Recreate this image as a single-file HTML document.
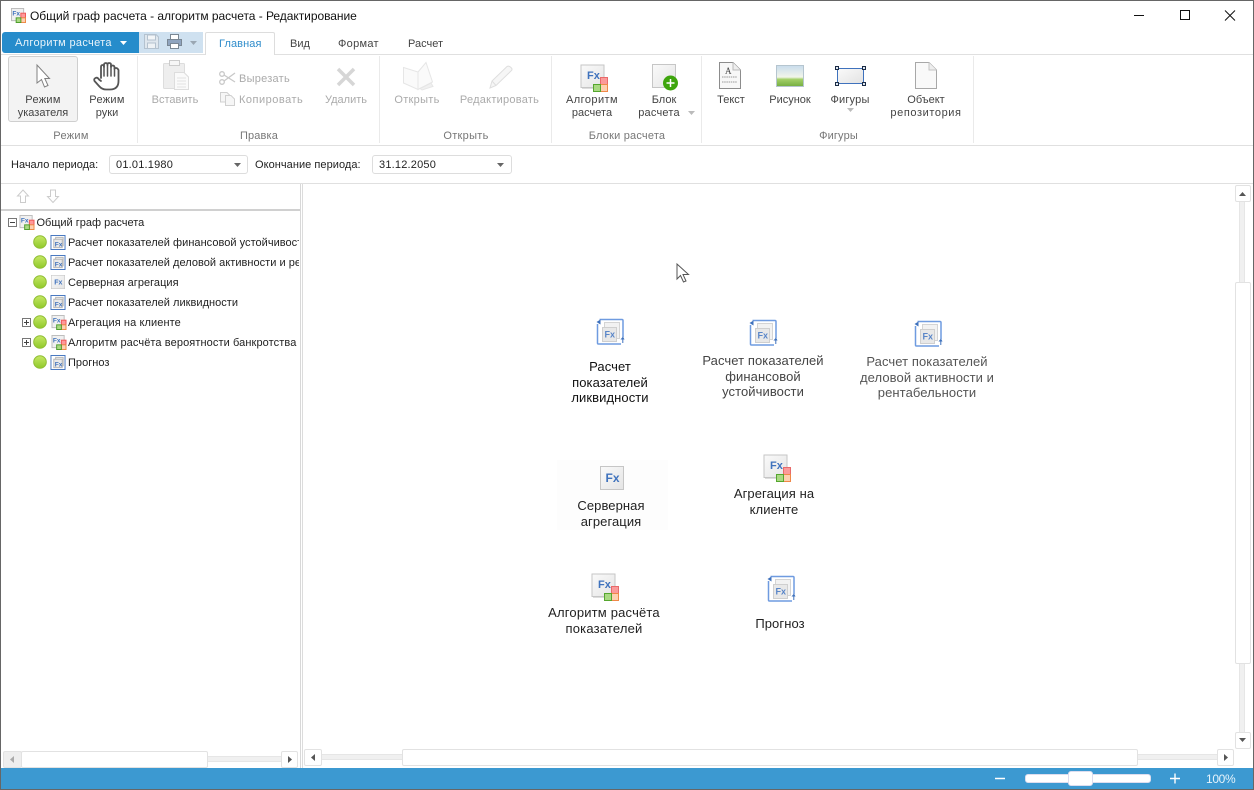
<!DOCTYPE html>
<html><head><meta charset="utf-8"><title>Общий граф расчета</title>
<style>
html,body{margin:0;padding:0}
body{width:1254px;height:790px;overflow:hidden;background:#fff;position:relative;font-family:"Liberation Sans","DejaVu Sans",sans-serif}
.t{position:absolute;white-space:nowrap;font-size:11px;line-height:14px;color:#444}
.c{transform:translateX(-50%);text-align:center}
.d{color:#aaa}
.g{color:#777}
.b{position:absolute;box-sizing:border-box}
.tree{position:absolute;white-space:nowrap;font-size:11px;line-height:14px;color:#222;left:68px;letter-spacing:.03px}
.cv{position:absolute;transform:translateX(-50%);text-align:center;white-space:nowrap;font-size:13px;line-height:15.5px;color:#222;letter-spacing:.08px}
svg{position:absolute;overflow:visible}
.sb{position:absolute;box-sizing:border-box;background:#fff;border:1px solid #e2e2e2;border-radius:2px}
.tr{position:absolute;background:#f0f0f0;border:1px solid #e6e6e6;box-sizing:border-box}
</style></head><body>

<svg width="0" height="0" style="position:absolute">
<defs>
<linearGradient id="pg" x1="0" y1="0" x2="1" y2="1"><stop offset="0" stop-color="#fafafa"/><stop offset="1" stop-color="#e4e4e4"/></linearGradient>
<linearGradient id="gb" x1="0" y1="0" x2="0" y2="1"><stop offset="0" stop-color="#c6e865"/><stop offset="1" stop-color="#8fc82a"/></linearGradient>
<linearGradient id="sky" x1="0" y1="0" x2="0" y2="1"><stop offset="0" stop-color="#c8dcec"/><stop offset=".55" stop-color="#f2f5ea"/><stop offset=".66" stop-color="#a3d068"/><stop offset="1" stop-color="#74ad40"/></linearGradient>
<symbol id="alg" viewBox="0 0 29 29">
<rect x="1" y="1" width="23" height="22.500" fill="url(#pg)" stroke="#c6c6c6"/>
<path d="M2 24.500H24" stroke="#ddd"/>
<text x="7" y="15" font-family="Liberation Sans" font-weight="bold" font-size="11" fill="#3f72bd">Fx</text>
<rect x="20.500" y="13.500" width="7" height="7" fill="#fb9a9a" stroke="#e86a6a"/>
<rect x="20.500" y="20.500" width="7" height="7" fill="#fdd0b0" stroke="#f08848"/>
<rect x="13.500" y="20.500" width="7" height="7" fill="#a9d982" stroke="#55a62e"/>
</symbol>
<symbol id="calc" viewBox="0 0 29 28">
<path d="M3.500 1.500H26Q27 1.500 27 2.500V19M25 26H2.500Q1.500 26 1.500 25V6" fill="none" stroke="#6f9be0" stroke-width="1.500"/>
<path d="M4.500 1.500L.5 4 4.500 6.500zM24.500 21.500L27 18.500 28.500 21.500z" fill="#3f72bd"/>
<path d="M26.800 21V25" stroke="#3f72bd"/>
<rect x="8.500" y="4.500" width="15" height="16" fill="#f2f2f2" stroke="#d4d4d4"/>
<rect x="6.500" y="9.500" width="14" height="14" fill="#e8e8e8" stroke="#cfcfcf"/>
<text x="8.500" y="19.500" font-family="Liberation Sans" font-weight="bold" font-size="9" fill="#5a86c8">Fx</text>
</symbol>
<symbol id="srv" viewBox="0 0 24 24">
<rect x=".5" y=".5" width="23" height="23" fill="url(#pg)" stroke="#c6c6c6"/>
<text x="5.500" y="16" font-family="Liberation Sans" font-weight="bold" font-size="12" fill="#3f72bd">Fx</text>
</symbol>
<symbol id="tcalc" viewBox="0 0 16 16">
<rect x=".5" y=".5" width="15" height="15" fill="#fff" stroke="#3f72bd"/>
<rect x="5.500" y="2.500" width="8" height="9" fill="#eee" stroke="#b4b4b4"/>
<rect x="3.500" y="4.500" width="9" height="9" fill="#e9e9e9" stroke="#b4b4b4"/>
<text x="4.500" y="12" font-family="Liberation Sans" font-weight="bold" font-size="7" fill="#3f72bd">Fx</text>
</symbol>
<symbol id="talg" viewBox="0 0 16 16">
<rect x=".5" y=".5" width="13" height="13" fill="#f0f0f0" stroke="#bbb"/>
<text x="1.500" y="8" font-family="Liberation Sans" font-weight="bold" font-size="7" fill="#3f72bd">Fx</text>
<rect x="10.500" y="5.500" width="5" height="5" fill="#f99" stroke="#e55"/>
<rect x="10.500" y="10.500" width="5" height="5" fill="#fdd0b0" stroke="#e84"/>
<rect x="5.500" y="10.500" width="5" height="5" fill="#a9d982" stroke="#4a9a28"/>
</symbol>
<symbol id="bul" viewBox="0 0 14 14"><circle cx="7" cy="7" r="6.300" fill="url(#gb)" stroke="#8fbd34"/></symbol>
<symbol id="plus" viewBox="0 0 9 9"><rect x=".5" y=".5" width="8" height="8" fill="#fff" stroke="#777"/><path d="M2 4.500H7M4.500 2V7" stroke="#444"/></symbol>
</defs></svg>

<!-- window frame -->
<div class="b" style="left:0;top:0;width:1254px;height:790px;border:1px solid #666;z-index:50;pointer-events:none"></div>

<!-- title -->
<svg style="left:11px;top:8px" width="15" height="15" viewBox="0 0 16 16"><use href="#talg" width="16" height="16"/></svg>
<div class="t" style="left:30px;top:9px;font-size:12px;color:#111;letter-spacing:-.04px">Общий граф расчета - алгоритм расчета - Редактирование</div>
<svg style="left:1134px;top:8px" width="112" height="16" fill="none" stroke="#111">
<path d="M0 7.500H10"/>
<rect x="46.500" y="2.500" width="9" height="9"/>
<path d="M91 2.500L101 12.500M101 2.500L91 12.500" stroke-width="1"/>
</svg>

<!-- app button, QAT, tabs -->
<div class="b" style="left:2px;top:32px;width:137px;height:21px;background:#268ccb;border-radius:3px 0 0 3px"></div>
<div class="t" style="left:15px;top:36px;color:#e8f3fa;letter-spacing:.32px">Алгоритм расчета</div>
<svg style="left:120px;top:41px" width="7" height="4"><path d="M0 0H7L3.500 4z" fill="#fff"/></svg>
<div class="b" style="left:139px;top:32px;width:64px;height:21px;background:#cfe1f0"></div>
<svg style="left:144px;top:34px" width="15" height="15" fill="none" stroke="#b4c2cf"><path d="M.5 .5H12L14.500 3V14.500H.5z" fill="#dfe7ee"/><rect x="3.500" y="1" width="8" height="5" fill="#f3f6f8"/><rect x="3.500" y="9" width="8" height="5.500" fill="#eef2f5"/></svg>
<svg style="left:167px;top:34px" width="15" height="15" fill="none" stroke="#7a8794"><rect x="3.500" y=".5" width="8" height="5" fill="#fff"/><rect x=".5" y="5.500" width="14" height="6" fill="#8fa4bf"/><rect x="3.500" y="9.500" width="8" height="5" fill="#fff"/></svg>
<svg style="left:190px;top:41px" width="7" height="4"><path d="M0 0H7L3.500 4z" fill="#9aa7b3"/></svg>
<div class="b" style="left:205px;top:32px;width:70px;height:23px;background:#fff;border:1px solid #ddd;border-bottom:none;border-radius:2px 2px 0 0;z-index:2"></div>
<div class="t" style="left:219px;top:37px;color:#2f8ccb;z-index:3;letter-spacing:.1px">Главная</div>
<div class="t" style="left:290px;top:37px">Вид</div>
<div class="t" style="left:338px;top:37px;letter-spacing:.3px">Формат</div>
<div class="t" style="left:408px;top:37px">Расчет</div>
<div class="b" style="left:1px;top:54px;width:1252px;height:1px;background:#e0e0e0"></div>

<!-- ribbon -->
<div class="b" style="left:1px;top:145px;width:1252px;height:1px;background:#e0e0e0"></div>
<div class="b" style="left:137px;top:56px;width:1px;height:87px;background:#eaeaea"></div>
<div class="b" style="left:379px;top:56px;width:1px;height:87px;background:#eaeaea"></div>
<div class="b" style="left:551px;top:56px;width:1px;height:87px;background:#eaeaea"></div>
<div class="b" style="left:701px;top:56px;width:1px;height:87px;background:#eaeaea"></div>
<div class="b" style="left:973px;top:56px;width:1px;height:87px;background:#eaeaea"></div>
<div class="b" style="left:8px;top:56px;width:70px;height:66px;background:#f3f3f3;border:1px solid #cfcfcf;border-radius:3px"></div>

<svg style="left:36px;top:64px" width="14" height="24"><path d="M1 1V19L5.500 15.500 8.500 23 12 21.500 8.800 14.500H13.500z" fill="#fff" stroke="#808080"/></svg>
<svg style="left:93px;top:62px" width="27" height="29" fill="none" stroke="#555" stroke-width="1.800" stroke-linecap="round" stroke-linejoin="round"><path d="M8 16V5Q8 3 9.500 3T11 5V3Q11 1 12.800 1T14.500 3V2.500Q14.500 1 16.300 1T18 3V5Q18 3.500 19.600 3.500T21.500 5V7Q21.500 6 23 6T25.500 8V19Q25.500 27.500 17 27.500H13Q9 27.500 6 24L1.500 19Q.5 17 2.500 16T6 17.500L8 19"/><path d="M11 5V14M14.500 3V14M18 4V14M21.500 6V14" stroke-width="1.500"/></svg>
<div class="t c" style="left:43px;top:94px;line-height:13px"><span style="letter-spacing:.3px">Режим</span><br>указателя</div>
<div class="t c" style="left:107px;top:94px;line-height:13px"><span style="letter-spacing:.3px">Режим</span><br>руки</div>
<div class="t c g" style="left:71px;top:129px;letter-spacing:.3px">Режим</div>

<!-- Paste -->
<svg style="left:163px;top:60px" width="27" height="31" fill="none"><rect x=".5" y="3.500" width="21" height="25" rx="1" fill="#eee" stroke="#ddd"/><rect x="6.500" y=".5" width="10" height="5" fill="#f6f6f6" stroke="#ccc"/><path d="M11.500 12.500H21L25.500 17V29.500H11.500z" fill="#fafafa" stroke="#ddd"/><path d="M14 18H23M14 21H23M14 24H23M14 27H23" stroke="#e3e3e3"/></svg>
<div class="t c d" style="left:175px;top:93px">Вставить</div>
<svg style="left:219px;top:71px" width="17" height="14" fill="none" stroke="#c8c8c8" stroke-width="1.300"><circle cx="3" cy="3" r="2.300"/><circle cx="3" cy="11" r="2.300"/><path d="M5 4L16 11M5 10L16 2"/></svg>
<div class="t d" style="left:239px;top:72px;letter-spacing:.25px">Вырезать</div>
<svg style="left:220px;top:92px" width="15" height="14" fill="#f6f6f6" stroke="#d0d0d0"><path d="M.5 .5H7L9.500 3V10H.5z"/><path d="M5.500 3.500H11L14.500 7V13.500H5.500z"/></svg>
<div class="t d" style="left:239px;top:93px;letter-spacing:.5px">Копировать</div>
<svg style="left:336px;top:67px" width="20" height="20"><path d="M2 2L18 18M18 2L2 18" stroke="#d6d6d6" stroke-width="3.500"/></svg>
<div class="t c d" style="left:346px;top:93px">Удалить</div>
<div class="t c g" style="left:259px;top:129px;letter-spacing:.15px">Правка</div>

<!-- Open / edit -->
<svg style="left:403px;top:62px" width="31" height="29" fill="#fafafa" stroke="#e6e6e6"><path d="M.5 5.500L15 10V27.500L.5 21z"/><path d="M15 10L23 .5 29.500 20 15 27.500z"/><path d="M17 26.500L28 21 30 24.500 19 28z" fill="#f0f0f0"/></svg>
<div class="t c d" style="left:417px;top:93px;letter-spacing:.3px">Открыть</div>
<svg style="left:489px;top:65px" width="24" height="24" fill="#f6f6f6" stroke="#dedede"><path d="M1 23L3 16 18 1.500Q20 .5 22 2.500T22 6L7 20.500z"/><path d="M3 16L7 20.500" /></svg>
<div class="t c d" style="left:499.500px;top:93px;letter-spacing:.25px">Редактировать</div>
<div class="t c g" style="left:466px;top:129px;letter-spacing:.3px">Открыть</div>

<!-- Calc blocks -->
<svg style="left:580px;top:64px" width="29" height="29"><use href="#alg" width="29" height="29"/></svg>
<div class="t c" style="left:592px;top:94px;line-height:13px"><span style="letter-spacing:.45px">Алгоритм</span><br>расчета</div>
<svg style="left:652px;top:64px" width="28" height="27"><rect x=".5" y=".5" width="23" height="23" fill="url(#pg)" stroke="#c6c6c6"/><circle cx="18.500" cy="19" r="7.500" fill="#3ea50d"/><path d="M14.500 19H22.500M18.500 15V23" stroke="#fff" stroke-width="1.500"/></svg>
<div class="t c" style="left:664px;top:94px;line-height:13px">Блок</div>
<div class="t c" style="left:659px;top:107px;line-height:13px;letter-spacing:.2px">расчета</div>
<svg style="left:688px;top:111px" width="7" height="4"><path d="M0 0H7L3.500 4z" fill="#bbb"/></svg>
<div class="t c g" style="left:627px;top:129px;letter-spacing:.2px">Блоки расчета</div>

<!-- Figures -->
<svg style="left:719px;top:62px" width="22" height="27" fill="none"><path d="M.5 .5H14L21.500 8V26.500H.5z" fill="#f7f7f7" stroke="#8c8c8c"/><path d="M14 .5V8H21.500" fill="#eee" stroke="#bbb"/><text x="6" y="12" font-family="Liberation Serif" font-size="9" fill="#444">A</text><path d="M3 15H18M3 20H18" stroke="#999" stroke-dasharray="1.500 .7"/></svg>
<div class="t c" style="left:731px;top:93px">Текст</div>
<svg style="left:776px;top:65px" width="28" height="22"><rect x=".5" y=".5" width="27" height="21" fill="url(#sky)" stroke="#b5c5cf"/></svg>
<div class="t c" style="left:790px;top:93px">Рисунок</div>
<svg style="left:835px;top:66px" width="31" height="20"><defs><linearGradient id="sh" x1="0" y1="0" x2="1" y2="1"><stop offset="0" stop-color="#fafafa"/><stop offset="1" stop-color="#e2e2e2"/></linearGradient></defs><rect x="2.500" y="2.500" width="26" height="15" fill="url(#sh)" stroke="#3f72bd"/><g fill="#dfe8f2" stroke="#1a2a44"><rect x=".5" y=".5" width="3" height="3"/><rect x="27.500" y=".5" width="3" height="3"/><rect x=".5" y="16.500" width="3" height="3"/><rect x="27.500" y="16.500" width="3" height="3"/></g></svg>
<div class="t c" style="left:850px;top:93px;letter-spacing:.2px">Фигуры</div>
<svg style="left:847px;top:108px" width="7" height="4"><path d="M0 0H7L3.500 4z" fill="#bbb"/></svg>
<svg style="left:915px;top:62px" width="23" height="28"><path d="M.5 .5H14L21.500 8V26.500H.5z" fill="#f9f9f9" stroke="#a8a8a8"/><path d="M14 .5V8H21.500" fill="#eee" stroke="#c4c4c4"/></svg>
<div class="t c" style="left:926px;top:94px;line-height:13px">Объект<br><span style="letter-spacing:.6px">репозитория</span></div>
<div class="t c g" style="left:838.500px;top:129px;letter-spacing:.15px">Фигуры</div>

<!-- date row -->
<div class="t" style="left:11px;top:158px;color:#222">Начало периода:</div>
<div class="b" style="left:109px;top:155px;width:139px;height:19px;border:1px solid #ddd;border-radius:3px"></div>
<div class="t" style="left:116px;top:158px;color:#222;letter-spacing:.2px">01.01.1980</div>
<svg style="left:234px;top:163px" width="7" height="4"><path d="M0 0H7L3.500 4z" fill="#666"/></svg>
<div class="t" style="left:255px;top:158px;color:#222;letter-spacing:.05px">Окончание периода:</div>
<div class="b" style="left:372px;top:155px;width:140px;height:19px;border:1px solid #ddd;border-radius:3px"></div>
<div class="t" style="left:379px;top:158px;color:#222;letter-spacing:.2px">31.12.2050</div>
<svg style="left:497px;top:163px" width="7" height="4"><path d="M0 0H7L3.500 4z" fill="#666"/></svg>
<div class="b" style="left:1px;top:183px;width:1252px;height:1px;background:#e0e0e0"></div>

<!-- left panel toolbar -->
<svg style="left:17px;top:189px" width="42" height="15" fill="#fff" stroke="#ccc"><path d="M6 1L11.500 7H8.500V13.500H3.500V7H.5z"/><path d="M36 13.500L41.500 7.500H38.500V1H33.500V7.500H30.500z"/></svg>
<div class="b" style="left:1px;top:209px;width:300px;height:2px;background:#d0d0d0"></div>
<div class="b" style="left:300px;top:184px;width:1px;height:584px;background:#d8d8d8"></div>
<div class="b" style="left:302px;top:184px;width:1px;height:584px;background:#dcdcdc"></div>

<!-- tree -->
<svg style="left:8px;top:218px" width="9" height="9"><rect x=".5" y=".5" width="8" height="8" fill="#fff" stroke="#777"/><path d="M2 4.500H7" stroke="#444"/></svg>
<svg style="left:19px;top:215px" width="16" height="15"><use href="#talg" width="16" height="15"/></svg>
<div class="tree" style="left:36.500px;top:216px;letter-spacing:0">Общий граф расчета</div>

<div style="position:absolute;left:0;top:232px;width:299px;height:140px;overflow:hidden">
<svg style="left:33px;top:3px" width="14" height="14"><use href="#bul" width="14" height="14"/></svg>
<svg style="left:50px;top:3px" width="16" height="15"><use href="#tcalc" width="16" height="15"/></svg>
<div class="tree" style="top:4px">Расчет показателей финансовой устойчивости</div>
<svg style="left:33px;top:23px" width="14" height="14"><use href="#bul" width="14" height="14"/></svg>
<svg style="left:50px;top:23px" width="16" height="15"><use href="#tcalc" width="16" height="15"/></svg>
<div class="tree" style="top:24px">Расчет показателей деловой активности и рентабельности</div>
<svg style="left:33px;top:43px" width="14" height="14"><use href="#bul" width="14" height="14"/></svg>
<svg style="left:51px;top:43px" width="14" height="14"><use href="#srv" width="14" height="14"/></svg>
<div class="tree" style="top:44px">Серверная агрегация</div>
<svg style="left:33px;top:63px" width="14" height="14"><use href="#bul" width="14" height="14"/></svg>
<svg style="left:50px;top:63px" width="16" height="15"><use href="#tcalc" width="16" height="15"/></svg>
<div class="tree" style="top:64px">Расчет показателей ликвидности</div>
<svg style="left:22px;top:86px" width="9" height="9"><use href="#plus" width="9" height="9"/></svg>
<svg style="left:33px;top:83px" width="14" height="14"><use href="#bul" width="14" height="14"/></svg>
<svg style="left:51px;top:83px" width="16" height="15"><use href="#talg" width="16" height="15"/></svg>
<div class="tree" style="top:84px;letter-spacing:.1px">Агрегация на клиенте</div>
<svg style="left:22px;top:106px" width="9" height="9"><use href="#plus" width="9" height="9"/></svg>
<svg style="left:33px;top:103px" width="14" height="14"><use href="#bul" width="14" height="14"/></svg>
<svg style="left:51px;top:103px" width="16" height="15"><use href="#talg" width="16" height="15"/></svg>
<div class="tree" style="top:104px;letter-spacing:.1px">Алгоритм расчёта вероятности банкротства</div>
<svg style="left:33px;top:123px" width="14" height="14"><use href="#bul" width="14" height="14"/></svg>
<svg style="left:50px;top:123px" width="16" height="15"><use href="#tcalc" width="16" height="15"/></svg>
<div class="tree" style="top:124px">Прогноз</div>
</div>

<!-- canvas -->
<svg style="left:676px;top:263px" width="14" height="20"><path d="M1 1V16L4.500 12.500 7.500 19 10 18 7 11.500H12.500z" fill="#fff" stroke="#555"/></svg>
<div class="b" style="left:557px;top:460px;width:111px;height:70px;background:#fdfdfd"></div>

<svg style="left:596px;top:318px" width="29" height="28"><use href="#calc" width="29" height="28"/></svg>
<div class="cv" style="left:610px;top:359px;color:#111">Расчет<br>показателей<br>ликвидности</div>
<svg style="left:749px;top:319px" width="29" height="28"><use href="#calc" width="29" height="28"/></svg>
<div class="cv" style="left:763px;top:353px;color:#444">Расчет показателей<br>финансовой<br>устойчивости</div>
<svg style="left:914px;top:320px" width="29" height="28"><use href="#calc" width="29" height="28"/></svg>
<div class="cv" style="left:927px;top:354px;color:#555">Расчет показателей<br>деловой активности и<br>рентабельности</div>

<svg style="left:600px;top:466px" width="24" height="24"><use href="#srv" width="24" height="24"/></svg>
<div class="cv" style="left:611px;top:498px">Серверная<br>агрегация</div>
<svg style="left:763px;top:454px" width="29" height="29"><use href="#alg" width="29" height="29"/></svg>
<div class="cv" style="left:774px;top:486px">Агрегация на<br>клиенте</div>
<svg style="left:591px;top:573px" width="29" height="29"><use href="#alg" width="29" height="29"/></svg>
<div class="cv" style="left:604px;top:605px;letter-spacing:.18px">Алгоритм расчёта<br>показателей</div>
<svg style="left:767px;top:575px" width="29" height="28"><use href="#calc" width="29" height="28"/></svg>
<div class="cv" style="left:780px;top:616px">Прогноз</div>

<!-- left hscroll -->
<div class="tr" style="left:207px;top:756px;width:75px;height:6px"></div>
<div class="sb" style="left:3px;top:751px;width:19px;height:17px;background:#eee"></div>
<svg style="left:10px;top:756px" width="4" height="7"><path d="M4 0V7L0 3.500z" fill="#aaa"/></svg>
<div class="sb" style="left:21px;top:751px;width:187px;height:17px"></div>
<div class="sb" style="left:281px;top:751px;width:17px;height:17px"></div>
<svg style="left:288px;top:756px" width="4" height="7"><path d="M0 0V7L4 3.500z" fill="#555"/></svg>

<!-- right hscroll -->
<div class="tr" style="left:321px;top:754px;width:897px;height:6px"></div>
<div class="sb" style="left:304px;top:749px;width:18px;height:17px"></div>
<svg style="left:311px;top:754px" width="4" height="7"><path d="M4 0V7L0 3.500z" fill="#555"/></svg>
<div class="sb" style="left:402px;top:749px;width:736px;height:17px"></div>
<div class="sb" style="left:1217px;top:749px;width:17px;height:17px"></div>
<svg style="left:1224px;top:754px" width="4" height="7"><path d="M0 0V7L4 3.500z" fill="#555"/></svg>

<!-- vscroll -->
<div class="tr" style="left:1239px;top:201px;width:6px;height:532px"></div>
<div class="sb" style="left:1235px;top:185px;width:16px;height:17px"></div>
<svg style="left:1239px;top:192px" width="7" height="4"><path d="M0 4H7L3.500 0z" fill="#555"/></svg>
<div class="sb" style="left:1235px;top:282px;width:16px;height:382px"></div>
<div class="sb" style="left:1235px;top:732px;width:16px;height:17px"></div>
<svg style="left:1239px;top:738px" width="7" height="4"><path d="M0 0H7L3.500 4z" fill="#555"/></svg>

<!-- status bar -->
<div class="b" style="left:1px;top:768px;width:1252px;height:21px;background:#3c99d1"></div>
<svg style="left:995px;top:773px" width="190" height="11"><path d="M0 5.500H10M175 5.500H185M180 .5V10.500" stroke="#fff" stroke-width="1.400"/></svg>
<div class="b" style="left:1025px;top:774px;width:126px;height:9px;background:#fff;border:1px solid #dde;border-radius:3px"></div>
<div class="b" style="left:1068px;top:771px;width:25px;height:15px;background:#fff;border:1px solid #dde;border-radius:3px"></div>
<div class="t" style="left:1206px;top:772px;color:#e6f3fb;font-size:12px;letter-spacing:-.35px">100%</div>

</body></html>
